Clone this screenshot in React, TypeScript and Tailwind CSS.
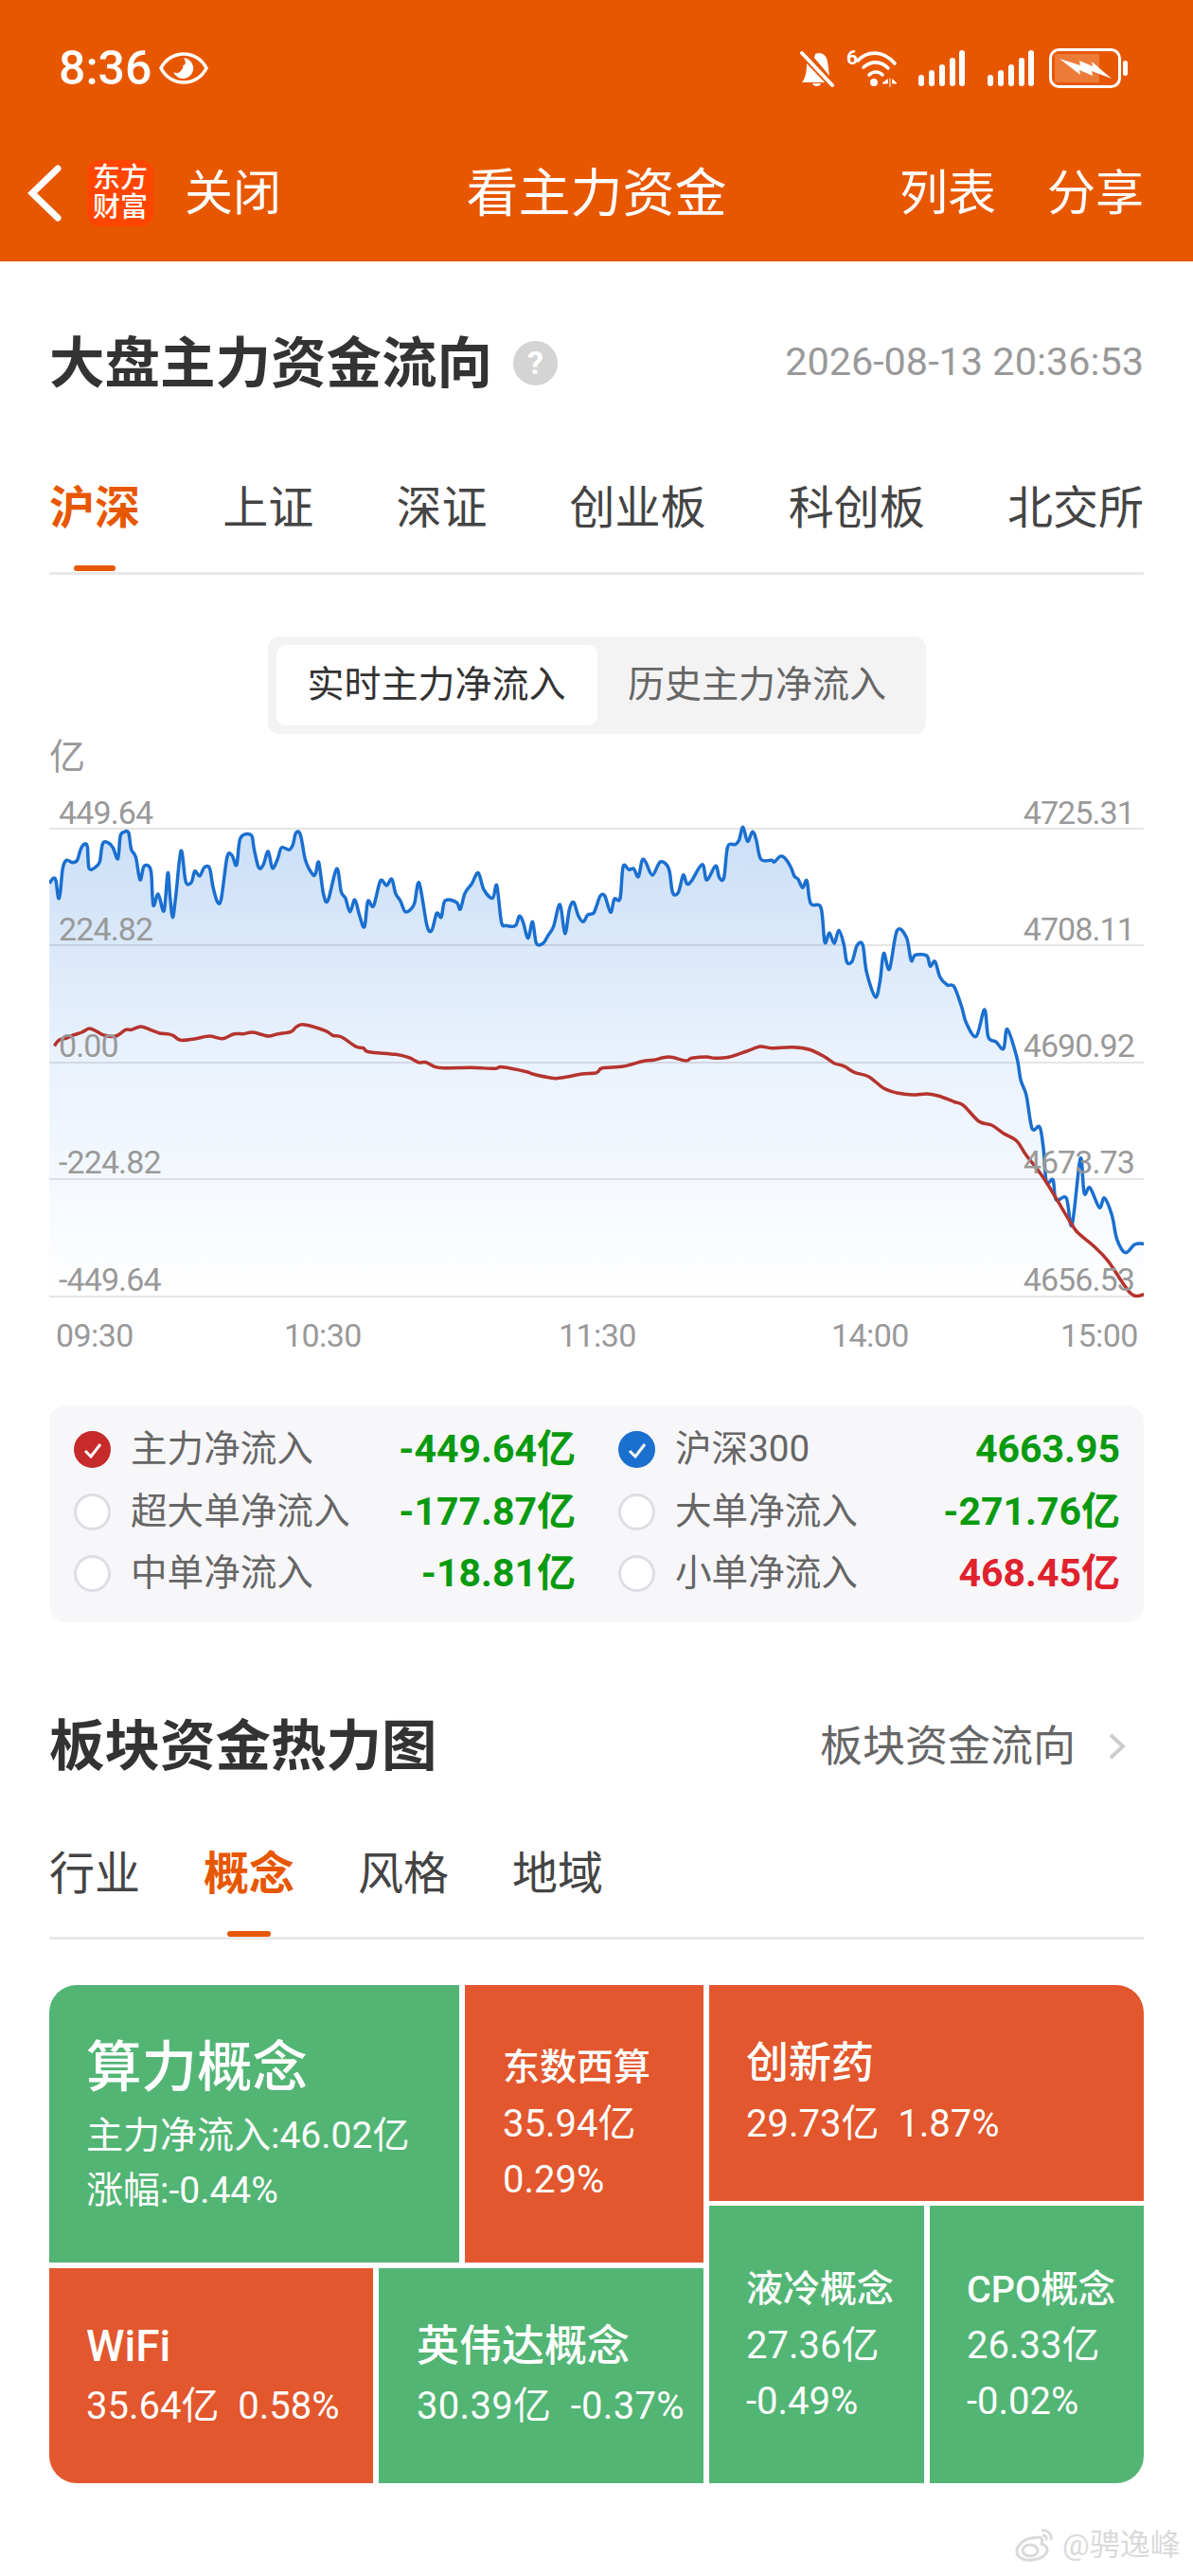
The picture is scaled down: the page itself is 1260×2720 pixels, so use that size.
// 看主力资金 page, 1260 wide
type Pt = [number, number];

// traced from the reference, left half / right half of the chart
const blueLeft: Pt[] = [[130,458],[140,442],[147,450],[153,503],[158,490],[165,410],[175,385],[190,392],[203,385],[212,350],[223,333],[230,345],[234,410],[250,408],[262,390],[270,332],[285,330],[297,345],[310,380],[316,310],[325,296],[338,298],[345,350],[357,375],[368,447],[378,405],[392,405],[398,430],[403,528],[416,492],[431,545],[441,425],[447,500],[454,566],[462,500],[476,355],[488,452],[503,455],[512,420],[525,435],[537,408],[551,410],[560,470],[572,518],[582,505],[597,375],[610,370],[622,400],[632,315],[660,305],[668,350],[680,408],[692,400],[705,357],[716,410],[730,380],[740,345],[760,352],[770,335],[778,298],[790,305],[803,385],[822,430],[830,425],[838,392],[850,490],[862,513],[885,412],[897,485],[908,505],[920,548],[933,510],[945,560],[958,596],[967,515],[982,530],[1000,450],[1016,465],[1030,445],[1040,490],[1053,515],[1065,548],[1080,540],[1090,520],[1102,457],[1122,590],[1135,607],[1148,553],[1160,565],[1170,513],[1200,518],[1210,540],[1222,490],[1240,460],[1257,425],[1272,478],[1295,505],[1306,465],[1318,580],[1330,592],[1355,592],[1365,562],[1375,580],[1388,632],[1400,580],[1410,648],[1428,648],[1440,625],[1455,595],[1472,525],[1485,617],[1497,540],[1508,518],[1520,560],[1533,580],[1545,558],[1560,553]];
const blueMid: Pt[] = [[0,530],[10,498],[22,498],[37,550],[47,508],[62,506],[70,405],[85,415],[98,412],[110,437],[120,385],[130,392],[147,432],[168,390],[190,412],[200,487],[215,487],[228,432],[238,460],[250,450],[278,398],[290,448],[313,403],[323,440],[335,440],[345,342],[365,335],[375,320],[385,280],[397,325],[410,295],[420,320],[432,382],[460,385],[468,390],[482,373],[495,378],[510,405],[520,435],[530,445],[542,472],[553,450],[563,522],[590,535],[600,645],[612,615],[625,648],[637,607],[650,650],[658,707],[672,705],[685,655],[700,653],[710,740],[733,818],[745,770],[755,680],[770,730],[790,608],[815,630],[827,702],[838,685],[868,687],[877,720],[890,706],[903,755],[922,780],[940,785],[960,850]];
const blueEnd: Pt[] = [[972,0],[998,43],[1020,-42],[1030,45],[1050,60],[1070,82],[1080,20],[1105,110],[1115,180],[1130,230],[1145,335],[1165,330],[1175,400],[1183,505],[1200,497],[1208,560],[1235,555],[1250,640],[1272,430],[1282,540],[1297,522],[1322,585],[1335,555],[1355,610],[1368,685],[1390,728],[1415,702],[1440,700]];
const redLeft: Pt[] = [[143,73],[155,55],[175,48],[195,38],[215,30],[235,18],[255,28],[275,40],[305,42],[330,22],[345,22],[370,12],[395,22],[420,33],[440,35],[455,40],[475,55],[515,50],[550,42],[585,50],[615,35],[640,35],[665,30],[705,42],[730,35],[765,28],[780,12],[800,6],[855,25],[875,40],[898,45],[935,75],[955,80],[970,92],[1040,100],[1075,110],[1100,125],[1120,125],[1145,140],[1170,143],[1240,142],[1300,145],[1320,140],[1385,155],[1400,162],[1450,175],[1470,175],[1495,170],[1530,162]];
const redRight: Pt[] = [[0,158],[15,143],[70,138],[120,122],[150,118],[190,108],[235,120],[250,112],[290,108],[310,112],[350,108],[395,90],[430,75],[460,80],[515,77],[560,85],[600,108],[625,128],[650,137],[680,158],[715,170],[755,207],[790,222],[830,228],[870,225],[900,232],[940,250],[965,262],[1005,312],[1040,325],[1070,350],[1105,375],[1130,420],[1180,500],[1250,640],[1270,670],[1305,705],[1345,755],[1405,858],[1440,860]];

const sx = 2.489;
const mapPts = (pts: Pt[], ox: number, oy: number): Pt[] => pts.map(([x, y]) => [ox + x / sx, oy + y / 3]);

const blue = [...mapPts(blueLeft, 0, 780), ...mapPts(blueMid, 630, 780), ...mapPts(blueEnd, 630, 1080)];
const red = [...mapPts(redLeft, 0, 1080), ...mapPts(redRight, 630, 1080)];

function smooth(pts: Pt[]) {
  let d = `M${pts[0][0].toFixed(1)} ${pts[0][1].toFixed(1)}`;
  for (let i = 0; i < pts.length - 1; i++) {
    const p0 = pts[Math.max(i - 1, 0)];
    const p1 = pts[i];
    const p2 = pts[i + 1];
    const p3 = pts[Math.min(i + 2, pts.length - 1)];
    const c1x = p1[0] + (p2[0] - p0[0]) / 6;
    const c1y = p1[1] + (p2[1] - p0[1]) / 6;
    const c2x = p2[0] - (p3[0] - p1[0]) / 6;
    const c2y = p2[1] - (p3[1] - p1[1]) / 6;
    d += `C${c1x.toFixed(1)} ${c1y.toFixed(1)} ${c2x.toFixed(1)} ${c2y.toFixed(1)} ${p2[0].toFixed(1)} ${p2[1].toFixed(1)}`;
  }
  return d;
}

const bluePath = smooth(blue);
const redPath = smooth(red);
const areaPath = `${bluePath}L1208 1369L52 1369Z`;
const gridYs = [875, 998, 1122, 1245, 1369];

const ticks = [
  { left: '449.64', right: '4725.31', top: 'top-[0px]' },
  { left: '224.82', right: '4708.11', top: 'top-[123px]' },
  { left: '0.00', right: '4690.92', top: 'top-[246px]' },
  { left: '-224.82', right: '4673.73', top: 'top-[369px]' },
  { left: '-449.64', right: '4656.53', top: 'top-[493px]' },
];

const times = [
  { t: '09:30', c: 'ml-[7px]' },
  { t: '10:30', c: 'ml-[159px]' },
  { t: '11:30', c: 'ml-[208px]' },
  { t: '14:00', c: 'ml-[206px]' },
  { t: '15:00', c: 'ml-[160px]' },
];

const legend = [
  { name: '主力净流入', value: '-449.64亿', color: 'text-[#0a9a10]', on: 'red' },
  { name: '沪深300', value: '4663.95', color: 'text-[#0a9a10]', on: 'blue' },
  { name: '超大单净流入', value: '-177.87亿', color: 'text-[#0a9a10]', on: '' },
  { name: '大单净流入', value: '-271.76亿', color: 'text-[#0a9a10]', on: '' },
  { name: '中单净流入', value: '-18.81亿', color: 'text-[#0a9a10]', on: '' },
  { name: '小单净流入', value: '468.45亿', color: 'text-[#e0222e]', on: '' },
];

function Radio({ on }: { on: string }) {
  if (!on) return <div className="w-[39px] h-[39px] shrink-0 rounded-full bg-white border-[3px] border-[#dcdee3]" />;
  return (
    <div className={`w-[39px] h-[39px] shrink-0 rounded-full flex items-center justify-center ${on === 'red' ? 'bg-[#c62a2a]' : 'bg-[#1a6fcf]'}`}>
      <svg width="24" height="24" viewBox="0 0 24 24" fill="none" stroke="#fff" strokeWidth="3">
        <path d="M4 13l6 6L20 6" />
      </svg>
    </div>
  );
}

function Tile({ bg, box, title, titleClass, lines, lineClass }: { bg: string; box: string; title: string; titleClass: string; lines: string[]; lineClass: string }) {
  return (
    <div className={`${bg} ${box} text-white`}>
      <div className={titleClass}>{title}</div>
      {lines.map((l) => (
        <div key={l} className={`${lineClass} whitespace-pre`}>{l}</div>
      ))}
    </div>
  );
}

function StatusIcons() {
  return (
    <div className="flex items-center">
      {/* muted bell */}
      <svg width="36" height="40" viewBox="0 0 36 40" fill="#fff">
        <path d="M16 5c6-3 12 1 13 8l2 15-16-19zM7 15l19 20H2c3-4 5-9 5-20zM13 36h9c-1 4-8 4-9 0z" />
        <path d="M2 4l32 34" stroke="#fff" strokeWidth="4" strokeLinecap="round" />
      </svg>
      {/* wifi 6 */}
      <div className="relative w-[66px] h-[40px] ml-[13px]">
        <span className="absolute left-0 top-[-3px] text-[21px] leading-[24px] font-bold text-white">6</span>
        <svg width="46" height="40" viewBox="0 0 46 40" fill="none" stroke="#fff" strokeWidth="3.6" strokeLinecap="round" className="absolute left-[9px] top-0">
          <path d="M3 12C13 1 30 1 42 15" />
          <path d="M9 19c8-7 18-7 26 1" />
          <path d="M15 27c4-4 10-4 14 0" />
          <circle cx="20" cy="35" r="4" fill="#fff" stroke="none" />
          <path d="M34 32l-5 4h5zM37 31v9M40 32l4 4h-4z" fill="#fff" strokeWidth="1" />
        </svg>
      </div>
      <Signal className="ml-[10px]" />
      <Signal className="ml-[24px]" />
      {/* battery */}
      <svg width="84" height="42" viewBox="0 0 84 42" className="ml-[16px]">
        <rect x="1.5" y="1.5" width="73" height="39" rx="9" fill="none" stroke="#fff" strokeWidth="3" />
        <path d="M6 6h47v30H6z" fill="#fff" fillOpacity="0.22" />
        <path d="M11 11l22 7-1-5 14 6-1-5 21 18-21-8 1 5-14-6 1 5z" fill="#fff" />
        <rect x="78" y="13" width="5" height="16" rx="2.5" fill="#fff" />
      </svg>
    </div>
  );
}

function Signal({ className }: { className: string }) {
  const bars = [
    { x: 0, h: 12 },
    { x: 11, h: 17 },
    { x: 22, h: 23 },
    { x: 33, h: 30 },
    { x: 43, h: 38 },
  ];
  return (
    <svg width="49" height="38" viewBox="0 0 49 38" fill="#fff" className={className}>
      {bars.map((b) => (
        <rect key={b.x} x={b.x} y={38 - b.h} width="6" height={b.h} rx="3" />
      ))}
    </svg>
  );
}

export default function App() {
  return (
    <div className="relative w-[1260px] h-[2720px] bg-white overflow-hidden font-[Roboto,'Noto_Sans_CJK_SC',sans-serif]">
      {/* orange header */}
      <div className="h-[276px] bg-[#e75700] text-white">
        <div className="h-[143px] pl-[62px] pr-[68px] flex items-center justify-between">
          <div className="flex items-center">
            <span className="text-[50px] font-medium leading-none w-[106px]">8:36</span>
            <svg width="52" height="36" viewBox="0 0 52 36" fill="none">
              <path d="M2 18C12 -2 40 -2 50 18C40 38 12 38 2 18Z" stroke="#fff" strokeWidth="3.5" />
              <path d="M26 7a11 11 0 1 1-11 15c4 2 6 1 8-1 2-3 3-4 2-6 3 0 4-3 1-8z" fill="#fff" />
            </svg>
          </div>
          <StatusIcons />
        </div>
        <div className="h-[122px] grid grid-cols-[1fr_auto_1fr] items-center">
          <div className="flex items-center">
            <svg width="36" height="60" viewBox="0 0 36 60" fill="none" stroke="#fff" strokeWidth="7" strokeLinecap="round" className="ml-[29px]">
              <path d="M32 4L5 30l27 26" />
            </svg>
            <div className="ml-[27px] w-[70px] h-[70px] rounded-[14px] bg-[#ff4500] flex flex-col items-center justify-center text-[29px] leading-[31px] font-medium">
              <span>东方</span>
              <span>财富</span>
            </div>
            <span className="ml-[33px] text-[51px] leading-none">关闭</span>
          </div>
          <span className="text-[55px] leading-none">看主力资金</span>
          <div className="flex justify-end pr-[52px] gap-[54px] text-[51px] leading-none">
            <span>列表</span>
            <span>分享</span>
          </div>
        </div>
        <div className="h-[11px]" />
      </div>

      <div className="px-[52px]">
        {/* title */}
        <div className="h-[214px] flex items-center">
          <span className="text-[58.5px] font-bold text-[#333] leading-none pt-[2px]">大盘主力资金流向</span>
          <div className="ml-[22px] w-[47px] h-[47px] rounded-full bg-[#d4d4d4] flex items-center justify-center text-[34px] font-bold text-white leading-none">?</div>
          <span className="ml-auto text-[41.4px] text-[#999] leading-none">2026-08-13 20:36:53</span>
        </div>

        {/* market tabs */}
        <div className="flex justify-between h-[117px] border-b-[3px] border-[#e8e8e8]">
          {['沪深', '上证', '深证', '创业板', '科创板', '北交所'].map((t, i) => (
            <div key={t} className="flex flex-col items-center">
              <div className={`h-[94px] flex items-center text-[48px] leading-none ${i === 0 ? 'font-bold text-[#e75700]' : 'text-[#444]'}`}>{t}</div>
              {i === 0 && <div className="mt-[13px] w-[44px] h-[6px] rounded-full bg-[#e75700]" />}
            </div>
          ))}
        </div>

        {/* segmented switch */}
        <div className="mt-[65px] mx-auto w-[695px] h-[103px] p-[9px] rounded-[12px] bg-[#f3f3f3] flex text-[39px] leading-none">
          <div className="w-[339px] rounded-[10px] bg-white flex items-center justify-center text-[#333]">实时主力净流入</div>
          <div className="flex-1 flex items-center justify-center text-[#666]">历史主力净流入</div>
        </div>

        <div className="h-[65px] text-[38px] leading-[48px] text-[#999]">亿</div>

        {/* chart */}
        <div className="relative h-[540px]">
          <svg width="1156" height="540" viewBox="52 840 1156 540" className="block">
            <defs>
              <linearGradient id="area" x1="0" y1="875" x2="0" y2="1369" gradientUnits="userSpaceOnUse">
                <stop offset="0" stopColor="#cbdff7" />
                <stop offset="0.5" stopColor="#eaf2fd" />
                <stop offset="1" stopColor="#ffffff" />
              </linearGradient>
            </defs>
            <path d={areaPath} fill="url(#area)" />
            {gridYs.map((y) => (
              <line key={y} x1="52" x2="1208" y1={y} y2={y} stroke="#000" strokeOpacity="0.1" strokeWidth="2" />
            ))}
            <path d={bluePath} fill="none" stroke="#1a6fcf" strokeWidth="3.5" strokeLinejoin="round" />
            <path d={redPath} fill="none" stroke="#b5332e" strokeWidth="3.5" strokeLinejoin="round" />
          </svg>
          {ticks.map((t) => (
            <div key={t.left} className={`absolute left-0 right-0 ${t.top} h-[36px] flex justify-between pl-[10px] pr-[10px] text-[34px] leading-[36px] tracking-[-0.9px] text-[#999]`}>
              <span>{t.left}</span>
              <span>{t.right}</span>
            </div>
          ))}
        </div>

        {/* time axis */}
        <div className="h-[60px] flex items-center text-[34px] leading-none tracking-[-0.6px] text-[#999]">
          {times.map((x) => (
            <span key={x.t} className={`${x.c} w-[82px]`}>{x.t}</span>
          ))}
        </div>

        {/* legend */}
        <div className="mt-[44px] h-[229px] pt-[14px] px-[26px] rounded-[18px] bg-[#f7f7f9] grid grid-cols-2 gap-x-[46px] auto-rows-[65.5px]">
          {legend.map((l) => (
            <div key={l.name} className="flex items-center">
              <Radio on={l.on} />
              <span className="ml-[21px] text-[38.6px] leading-none text-[#666]">{l.name}</span>
              <span className={`ml-auto mr-[-1px] text-[41px] font-bold leading-none ${l.color}`}>{l.value}</span>
            </div>
          ))}
        </div>

        {/* heat map head */}
        <div className="mt-[87px] h-[88px] flex items-center">
          <span className="text-[58.5px] font-bold text-[#333] leading-none">板块资金热力图</span>
          <span className="ml-auto text-[45px] text-[#666] leading-none">板块资金流向</span>
          <svg width="20" height="28" viewBox="0 0 20 28" fill="none" stroke="#ccc" strokeWidth="4" className="ml-[34px] mr-[18px]">
            <path d="M3 2l13 12L3 26" />
          </svg>
        </div>

        <div className="mt-[43px] flex gap-[67px] h-[117px] border-b-[3px] border-[#e8e8e8]">
          {['行业', '概念', '风格', '地域'].map((t, i) => (
            <div key={t} className="flex flex-col items-center">
              <div className={`h-[94px] flex items-center text-[48px] leading-none pt-[2px] ${i === 1 ? 'font-bold text-[#e75700]' : 'text-[#444]'}`}>{t}</div>
              {i === 1 && <div className="mt-[14px] w-[46px] h-[6px] rounded-full bg-[#e75700]" />}
            </div>
          ))}
        </div>

        {/* treemap */}
        <div className="mt-[48px] h-[526px] flex gap-[6px] rounded-[29px] overflow-hidden">
          <div className="w-[691px] flex flex-col gap-[6px]">
            <div className="h-[293px] flex gap-[6px]">
              <Tile bg="bg-[#52b574]" box="w-[433px] pl-[39px] pt-[58px]" title="算力概念" titleClass="text-[58.5px] font-medium leading-[58px] mb-[14px]" lines={['主力净流入:46.02亿', '涨幅:-0.44%']} lineClass="text-[39px] leading-[58px]" />
              <Tile bg="bg-[#e2572d]" box="flex-1 pl-[40px] pt-[58px]" title="东数西算" titleClass="text-[39px] font-medium leading-[59px]" lines={['35.94亿', '0.29%']} lineClass="text-[40px] leading-[59px]" />
            </div>
            <div className="flex-1 flex gap-[6px]">
              <Tile bg="bg-[#e2572d]" box="w-[342px] pl-[39px] pt-[51px]" title="WiFi" titleClass="text-[46px] font-medium leading-[63px]" lines={['35.64亿  0.58%']} lineClass="text-[40px] leading-[63px]" />
              <Tile bg="bg-[#52b574]" box="flex-1 pl-[40px] pt-[51px]" title="英伟达概念" titleClass="text-[45px] font-medium leading-[63px]" lines={['30.39亿  -0.37%']} lineClass="text-[40px] tracking-[0.3px] leading-[63px]" />
            </div>
          </div>
          <div className="flex-1 flex flex-col gap-[5px]">
            <Tile bg="bg-[#e2572d]" box="h-[228px] pl-[39px] pt-[50px]" title="创新药" titleClass="text-[45px] font-medium leading-[65px]" lines={['29.73亿  1.87%']} lineClass="text-[40px] leading-[63px]" />
            <div className="flex-1 flex gap-[6px]">
              <Tile bg="bg-[#52b574]" box="w-[227px] pl-[39px] pt-[59px]" title="液冷概念" titleClass="text-[39px] font-medium leading-[59px]" lines={['27.36亿', '-0.49%']} lineClass="text-[40px] leading-[59px]" />
              <Tile bg="bg-[#52b574]" box="flex-1 pl-[39px] pt-[59px]" title="CPO概念" titleClass="text-[39.5px] font-medium leading-[59px]" lines={['26.33亿', '-0.02%']} lineClass="text-[40px] leading-[59px]" />
            </div>
          </div>
        </div>
      </div>

      {/* weibo watermark */}
      <div className="absolute left-[1071px] top-[2668px] flex items-center h-[38px] text-[32px] leading-none text-[#dadada]">
        <svg width="47" height="38" viewBox="0 0 47 38" fill="none" stroke="#dadada" strokeWidth="3">
          <path d="M18 12C8 14 2 22 3 27c1 7 10 9 17 8 9-1 16-6 15-12-1-3-4-4-6-5 1-3 1-6-2-7-3 0-6 1-9 1z" />
          <ellipse cx="17" cy="25" rx="8" ry="6" />
          <path d="M29 4c6-1 11 3 10 10M30 9c3 0 5 1 4 5" />
        </svg>
        <span className="ml-[4px]">@骋逸峰</span>
      </div>
    </div>
  );
}
